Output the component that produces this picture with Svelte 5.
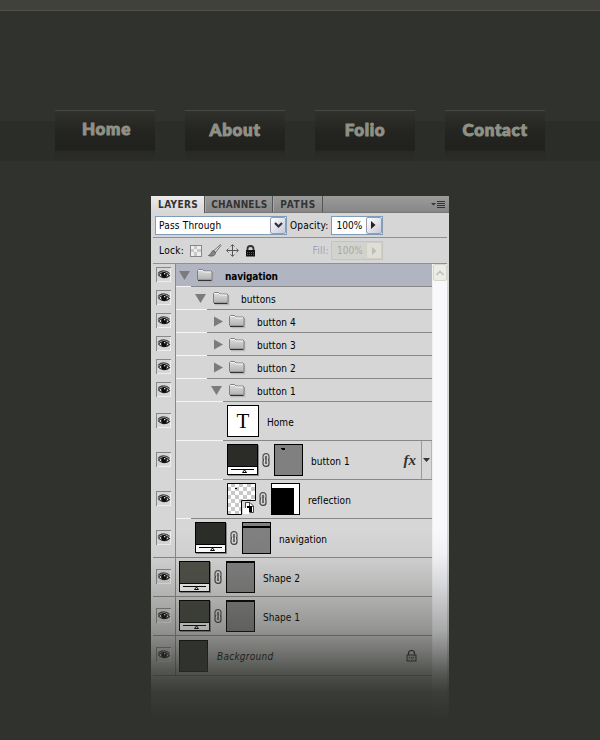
<script lang="ts">
  interface Layer {
    name: string;
    kind: 'group' | 'text' | 'shape' | 'smart' | 'background';
    level: number;
    // length of the light part of the rule under the row, -1 for a full width rule
    notch: number;
    open?: boolean;
    selected?: boolean;
    fx?: boolean;
    fill?: string;
    mask?: 'dot' | 'bar' | 'top' | 'block';
  }

  const menu = ['Home', 'About', 'Folio', 'Contact'];

  const layers: Layer[] = [
    { name: 'navigation', kind: 'group', level: 0, notch: 15, open: true, selected: true },
    { name: 'buttons', kind: 'group', level: 1, notch: 31, open: true },
    { name: 'button 4', kind: 'group', level: 2, notch: 31 },
    { name: 'button 3', kind: 'group', level: 2, notch: 31 },
    { name: 'button 2', kind: 'group', level: 2, notch: 31 },
    { name: 'button 1', kind: 'group', level: 2, notch: 47, open: true },
    { name: 'Home', kind: 'text', level: 3, notch: 47 },
    { name: 'button 1', kind: 'shape', level: 3, notch: 47, fill: '#2b2c27', mask: 'dot', fx: true },
    { name: 'reflection', kind: 'smart', level: 3, notch: 15, mask: 'block' },
    { name: 'navigation', kind: 'shape', level: 1, notch: -1, fill: '#2b2d28', mask: 'bar' },
    { name: 'Shape 2', kind: 'shape', level: 0, notch: -1, fill: '#4e4f47', mask: 'top' },
    { name: 'Shape 1', kind: 'shape', level: 0, notch: -1, fill: '#40423b', mask: 'top' },
    { name: 'Background', kind: 'background', level: 0, notch: -1 }
  ];
</script>

{#snippet eye()}
  <svg class="eye" width="15" height="15" viewBox="0 0 15 15">
    <path d="M2.500 8C5 5 10.500 5 13.500 8.500C10.500 11.500 5 11.500 2.500 8Z" fill="#e4e4e4" stroke="#222" stroke-width="1.100" />
    <path d="M2 6.500C4.500 3 10.500 2.800 13.500 6.500" fill="none" stroke="#444" stroke-width="1.200" />
    <circle cx="8" cy="7.900" r="2.900" fill="#0c0c0c" />
    <rect x="8" y="6" width="1.300" height="1.300" fill="#ddd" />
  </svg>
{/snippet}

{#snippet chain()}
  <svg class="chain" width="8" height="14" viewBox="0 0 8 14">
    <rect x="1" y=".7" width="6" height="7.300" rx="2.600" fill="#d0d0d0" stroke="#555" stroke-width="1.200" />
    <rect x="1" y="6" width="6" height="7.300" rx="2.600" fill="#d0d0d0" stroke="#444" stroke-width="1.200" />
    <path d="M2.200 5.500h3.600v3H2.200Z" fill="#eee" />
    <path d="M4 3v8" stroke="#333" stroke-width="1.300" />
  </svg>
{/snippet}

{#snippet folder()}
  <svg class="folder" width="18" height="15" viewBox="0 0 18 15">
    <path d="M2 13.500h13.500V4.500" fill="none" stroke="#aaa" stroke-width="1.500" opacity=".7" />
    <path d="M.5 11.500v-9l1-1h4l1.500 1.500h7l1 1v7.500l-.5.500H1.500Z" fill="url(#folder-face)" stroke="#808080" />
    <path d="M1.500 3v-.5h4L7 4h7" fill="none" stroke="#f4f4f4" />
    <path d="M1 12.500h13.500" stroke="#333" />
  </svg>
{/snippet}

<svg class="defs" width="0" height="0">
  <linearGradient id="folder-face" x1="0" y1="0" x2="0" y2="1">
    <stop offset="0" stop-color="#dedede" />
    <stop offset="1" stop-color="#b2b2b2" />
  </linearGradient>
  <pattern id="checks" width="8" height="8" patternUnits="userSpaceOnUse">
    <rect width="8" height="8" fill="#fff" />
    <path d="M4 0h4v4H4ZM0 4h4v4H0Z" fill="#c8c8c8" />
  </pattern>
</svg>

<div class="page">
  <div class="topbar"></div>

  <nav>
    {#each menu as item, i}
      <a href="#{item}" class:first={i === 0}><span>{item}</span></a>
    {/each}
  </nav>

  <section class="panel">
    <div class="tabs">
      <div class="tab active">LAYERS</div>
      <div class="tab">CHANNELS</div>
      <div class="tab">PATHS</div>
      <svg class="flyout" width="14" height="9" viewBox="0 0 14 9">
        <path d="M0 3h5L2.500 5.500Z" fill="#333" />
        <path d="M6 1.500h8M6 3.500h8M6 5.500h8M6 7.500h8" stroke="#333" />
      </svg>
    </div>

    <div class="options blend">
      <div class="select">
        <span>Pass Through</span>
        <div class="arrow">
          <svg width="9" height="7" viewBox="0 0 9 7">
            <path d="M1 1l3.500 3.500L8 1" fill="none" stroke="#303040" stroke-width="2.200" />
          </svg>
        </div>
      </div>
      <span class="label opacity">Opacity:</span>
      <div class="number">
        <span>100%</span>
        <div class="arrow">
          <svg width="5" height="8" viewBox="0 0 5 8"><path d="M0 0l4.500 4L0 8Z" fill="#222" /></svg>
        </div>
      </div>
    </div>

    <div class="options lock">
      <span class="label">Lock:</span>
      <svg class="tool checker" width="12" height="12" viewBox="0 0 12 12">
        <rect x=".5" y=".5" width="11" height="11" fill="#eee" stroke="#888" />
        <path d="M4 1h3v3H4ZM1 4h3v3H1ZM7 4h4v3H7ZM4 7h3v4H4Z" fill="#c8c8c8" />
      </svg>
      <svg class="tool brush" width="14" height="13" viewBox="0 0 14 13">
        <path d="M12.500.5L6 6.500l1.500 2L13 1.500Z" fill="#ddd" stroke="#666" stroke-width=".9" />
        <path d="M5.500 6.500C3 7 4 10 .5 11.500C4 13 7.500 11.500 7.500 8.800Z" fill="#888" stroke="#444" stroke-width=".7" />
      </svg>
      <svg class="tool move" width="13" height="13" viewBox="0 0 13 13">
        <path d="M6.500 1v11M1 6.500h11" stroke="#555" />
        <path d="M4.500 2.500l2-2 2 2M4.500 10.500l2 2 2-2M2.500 4.500l-2 2 2 2M10.500 4.500l2 2-2 2" fill="none" stroke="#666" />
      </svg>
      <svg class="tool padlock" width="11" height="12" viewBox="0 0 11 12">
        <path d="M2.500 6V4a3 3 0 0 1 6 0v2" fill="none" stroke="#333" stroke-width="1.800" />
        <rect x="1" y="5" width="9" height="6.500" fill="#111" />
        <path d="M2 7.500h7M2 9.500h7" stroke="#555" stroke-dasharray="1 1" />
      </svg>
      <span class="label fill">Fill:</span>
      <div class="number disabled">
        <span>100%</span>
        <div class="arrow">
          <svg width="5" height="8" viewBox="0 0 5 8"><path d="M0 0l4.500 4L0 8Z" fill="#bdbdb4" /></svg>
        </div>
      </div>
    </div>

    <div class="body">
      <div class="list">
        {#each layers as layer}
          <div class="row {layer.kind}" class:selected={layer.selected} class:full={layer.notch < 0}>
            <div class="visibility">{@render eye()}</div>
            <div class="cell">
              <div class="content" style="padding-left: {3 + layer.level * 16}px">
                {#if layer.kind === 'group'}
                  <svg class="twist" width="12" height="11" viewBox="0 0 12 11">
                    {#if layer.open}
                      <path d="M0 1h11L5.500 10Z" fill="#7b7b7b" />
                    {:else}
                      <path d="M3 .5l9 5-9 5Z" fill="#7b7b7b" />
                    {/if}
                  </svg>
                  {@render folder()}
                {:else if layer.kind === 'text'}
                  <div class="thumb type">T</div>
                {:else if layer.kind === 'shape'}
                  <div class="thumb vector">
                    <div class="swatch" style="background: {layer.fill}"></div>
                    <svg width="29" height="7" viewBox="0 0 29 7">
                      <path d="M3 2.500h23" stroke="#000" />
                      <path d="M16.500 3l2 2.500h-4Z" fill="#fff" stroke="#000" />
                    </svg>
                  </div>
                {:else if layer.kind === 'smart'}
                  <svg class="smart" width="29" height="32" viewBox="0 0 29 32">
                    <path d="M.5.500h28v17h-14v14H.5Z" fill="url(#checks)" stroke="#000" />
                    <path d="M8 5h2v1H8Z" />
                    <path d="M18.500 28V19.500h4.500l3.500 3.500v6.500h-4" fill="#fff" stroke="#444" />
                    <path d="M22.500 19.500V23.500H26.500" fill="none" stroke="#444" />
                    <rect x="20" y="23" width="5" height="6" fill="#000" />
                    <rect x="16" y="25" width="6" height="6" fill="#fff" />
                  </svg>
                {:else}
                  <div class="thumb flat"></div>
                {/if}

                {#if layer.mask}
                  {@render chain()}
                  <svg class="mask" width="29" height="32" viewBox="0 0 29 32">
                    {#if layer.mask === 'block'}
                      <rect x=".5" y=".5" width="28" height="31" fill="#fff" stroke="#000" />
                      <rect x="1" y="5" width="22" height="26" />
                    {:else}
                      <rect x=".5" y=".5" width="28" height="31" fill="#808080" stroke="#000" />
                      {#if layer.mask === 'dot'}
                        <path d="M7 4h4v2H8V5H7Z" />
                      {:else if layer.mask === 'bar'}
                        <rect y="4" width="29" height="2" />
                      {:else}
                        <rect width="29" height="2" />
                      {/if}
                    {/if}
                  </svg>
                {/if}

                <span class="name">{layer.name}</span>

                {#if layer.fx}
                  <em class="fx">fx</em>
                  <div class="fx-toggle">
                    <svg width="7" height="4" viewBox="0 0 7 4"><path d="M0 0h7L3.500 4Z" fill="#333" /></svg>
                  </div>
                {/if}
                {#if layer.kind === 'background'}
                  <svg class="locked" width="11" height="12" viewBox="0 0 11 12">
                    <path d="M2.500 5V3.500a3 3 0 0 1 6 0V5" fill="none" stroke="#222" stroke-width="1.200" />
                    <rect x="1" y="5" width="9" height="6" fill="#bbb" stroke="#222" />
                    <path d="M3 7.500h1M5 7.500h1v2M7 7.500h1" fill="none" stroke="#444" />
                  </svg>
                {/if}
              </div>
              <div class="rule"><i style="width: {Math.max(layer.notch, 0)}px"></i></div>
            </div>
          </div>
        {/each}
      </div>
      <div class="scrollbar">
        <div class="up">
          <svg width="8" height="6" viewBox="0 0 8 6"><path d="M.5 5L4 1.500 7.500 5" fill="none" stroke="#c2c2b8" stroke-width="1.600" /></svg>
        </div>
      </div>
    </div>
    <div class="fade"></div>
  </section>
</div>

<style>
  :global(body) {
    margin: 0;
    background: #30322d;
  }

  .defs {
    position: absolute;
  }

  .page {
    width: 600px;
    height: 740px;
    overflow: hidden;
    background: #30322d;
    font-family: "DejaVu Sans Condensed", "DejaVu Sans", sans-serif;
    font-stretch: condensed;
    font-size: 10px;
    letter-spacing: 0.05px;
    color: #000;
  }

  .page * {
    box-sizing: border-box;
  }

  svg {
    display: block;
    flex: none;
  }

  .topbar {
    height: 11px;
    background: #40413a;
    border-bottom: 1px solid #50514a;
  }

  nav {
    display: flex;
    justify-content: center;
    gap: 30px;
    margin-top: 99px;
    height: 52px;
    background: linear-gradient(transparent 11px, #2b2d28 11px, #2b2d28 51px, transparent 51px);
  }

  nav a {
    width: 100px;
    height: 51px;
    border-top: 1px solid #484944;
    background: linear-gradient(#30312c 0, #242521 20px, #20201e 39px, #282926 40px, #2b2d28 50px);
    color: #8f9184;
    font: 900 17px/38px Lato, sans-serif;
    letter-spacing: 0.7px;
    text-align: center;
    text-decoration: none;
    -webkit-text-stroke: 1px #8f9184;
  }

  nav a.first {
    line-height: 36px;
    padding-left: 3px;
  }

  .panel {
    position: relative;
    width: 298px;
    height: 544px;
    margin: 34px 0 0 151px;
    background: #d6d6d6;
  }

  .tabs {
    display: flex;
    height: 17px;
    background: linear-gradient(#9c9c9c, #868686);
    border-bottom: 1px solid #777;
  }

  .tab {
    height: 16px;
    padding: 0 5px;
    border-right: 1px solid #555;
    border-left: 1px solid #a8a8a8;
    color: #333;
    font-size: 10px;
    font-weight: bold;
    letter-spacing: 0.2px;
    line-height: 17px;
  }

  .tab:nth-child(3) {
    padding: 0 6px;
    letter-spacing: 0.7px;
  }

  .tab.active {
    height: 17px;
    padding: 0 6px 0 7px;
    background: linear-gradient(#ececec, #d6d6d6);
    border-left: none;
    letter-spacing: 0.4px;
  }

  .flyout {
    margin: 4px 4px 0 auto;
  }

  .options {
    display: flex;
    align-items: center;
    margin: 0 2px;
    border-bottom: 1px solid #909090;
  }

  .blend {
    height: 25px;
    padding-left: 2px;
  }

  .lock {
    height: 26px;
    padding-left: 6px;
  }

  .select,
  .number {
    display: flex;
    justify-content: space-between;
    height: 19px;
    border: 1px solid #7f9db9;
    background: #fff;
    line-height: 18px;
  }

  .select {
    width: 132px;
    padding-left: 3px;
    letter-spacing: 0.2px;
  }

  .number {
    width: 52px;
    padding-left: 5px;
  }

  .arrow {
    display: flex;
    align-items: center;
    justify-content: center;
    width: 16px;
    border: 1px solid #9a9aaa;
    border-radius: 2px;
    background: linear-gradient(135deg, #fff, #c8c8d8);
  }

  .opacity {
    margin: 0 2px 0 3px;
    letter-spacing: 0.2px;
  }

  .disabled {
    border-color: #c5c5bc;
    background: #d2d2ce;
    color: #a9a9a4;
  }

  .disabled .arrow {
    border-color: #d0d0c6;
    background: #dfdfd8;
  }

  .lock .label {
    letter-spacing: 0.3px;
  }

  .tool {
    margin-left: 6px;
  }

  .move {
    margin-left: 4px;
  }

  .fill {
    margin: 0 2px 0 auto;
    color: #9fa3ae;
  }

  .lock .number {
    margin-right: 64px;
  }

  .body {
    display: flex;
    height: 476px;
    padding-left: 2px;
  }

  .list {
    width: 279px;
  }

  .row {
    display: flex;
    height: 39px;
  }

  .row.group {
    height: 23px;
  }

  .row.background {
    height: 40px;
  }

  .visibility {
    width: 23px;
    padding: 11px 0 0 3px;
    border-right: 1px solid #888;
  }

  .group .visibility {
    padding-top: 3px;
  }

  .full .visibility {
    border-bottom: 1px solid #888;
  }

  .eye {
    box-shadow: inset 1px 1px #888, inset -1px -1px #eee;
  }

  .cell {
    display: flex;
    flex-direction: column;
    flex: 1;
  }

  .content {
    display: flex;
    align-items: center;
    flex: 1;
  }

  .selected .content {
    background: #b1b4c1;
  }

  .rule {
    height: 1px;
    background: #888;
  }

  .rule i {
    display: block;
    height: 1px;
    background: #f5f5f5;
  }

  .folder {
    margin: 0 10px 0 6px;
  }

  .selected .name {
    font-weight: bold;
    letter-spacing: -0.1px;
  }

  .name {
    padding-top: 2px;
  }

  .thumb {
    width: 32px;
    height: 32px;
    border: 1px solid #000;
    background: #fff;
  }

  .type {
    margin-right: 8px;
    font: 21px/31px "Liberation Serif", serif;
    text-align: center;
  }

  .vector {
    width: 31px;
    height: 31px;
    margin-bottom: 1px;
    box-shadow: 1px 1px #888;
  }

  .swatch {
    height: 22px;
    border-bottom: 1px solid #000;
  }

  .flat {
    width: 29px;
    margin-right: 9px;
    background: #30322d;
  }

  .chain {
    margin: 0 4px;
  }

  .smart + .chain {
    margin-left: 3px;
  }

  .mask {
    margin-right: 8px;
  }

  .background .name {
    font-style: italic;
    letter-spacing: 0.25px;
  }

  .fx {
    margin-left: auto;
    color: #333;
    font: italic bold 15px/18px "Liberation Serif", serif;
  }

  .fx-toggle {
    display: flex;
    align-items: center;
    justify-content: center;
    align-self: stretch;
    width: 11px;
    margin-left: 5px;
    border-left: 1px solid #999;
    border-right: 1px solid #b5b5b5;
  }

  .locked {
    margin: 0 15px 0 auto;
  }

  .scrollbar {
    width: 15px;
    background: #f8f8fd;
    border-left: 1px solid #f0f0ee;
  }

  .up {
    display: flex;
    align-items: center;
    justify-content: center;
    width: 14px;
    height: 17px;
    border: 1px solid #d5d5cc;
    border-radius: 2px;
    background: #ecece6;
  }

  .fade {
    position: absolute;
    left: 0;
    right: 0;
    bottom: 0;
    height: 210px;
    background: linear-gradient(
      rgba(48, 50, 45, 0),
      rgba(48, 50, 45, 0.04) 25px,
      rgba(48, 50, 45, 0.17) 55px,
      rgba(48, 50, 45, 0.4) 100px,
      rgba(48, 50, 45, 0.58) 120px,
      rgba(48, 50, 45, 0.82) 145px,
      rgba(48, 50, 45, 0.94) 162px,
      #30322d 190px
    );
  }
</style>
